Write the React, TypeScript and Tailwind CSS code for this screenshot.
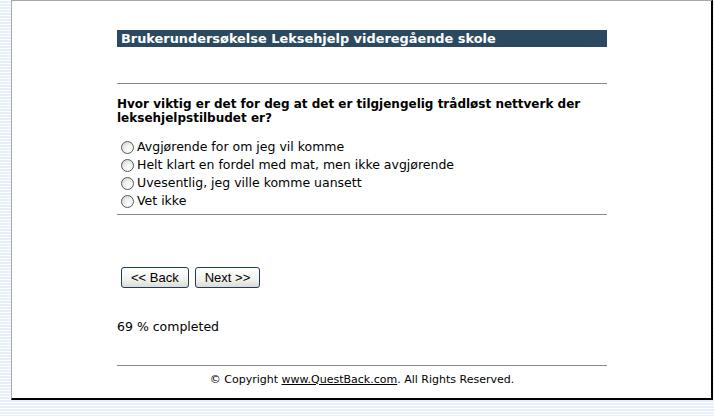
const options = [
  "Avgjørende for om jeg vil komme",
  "Helt klart en fordel med mat, men ikke avgjørende",
  "Uvesentlig, jeg ville komme uansett",
  "Vet ikke",
];

function Radio() {
  return (
    <span className="inline-block h-[13px] w-[13px] shrink-0 rounded-full border border-[#4d5a66] bg-[radial-gradient(circle_at_65%_70%,#ffffff_0%,#f2f2ee_40%,#cfcfc8_100%)]" />
  );
}

function Button({ label }: { label: string }) {
  return (
    <button
      type="button"
      className="h-[21px] rounded-[3px] border border-[#1c3d5e] bg-[linear-gradient(#ffffff,#f2f2ee_60%,#dcdcd4)] px-[9px] font-['Liberation_Sans',Arial,sans-serif] text-[13px] leading-none text-black"
    >
      {label}
    </button>
  );
}

export default function App() {
  return (
    <div className="h-[416px] w-[714px] overflow-hidden bg-[repeating-linear-gradient(to_bottom,#ffffff_0px,#ffffff_1px,#e8effc_1px,#e8effc_3px)] font-['DejaVu_Sans',Verdana,sans-serif]">
      <div className="ml-[11px] flex h-[400px] w-[702px] flex-col border-l border-t border-b-2 border-r-2 border-l-[#a8a8a8] border-t-[#a8a8a8] border-b-black border-r-black bg-white">
        <div className="ml-[105px] flex w-[490px] flex-col pt-[29px]">
          <div className="h-[17px] bg-[#2b4a60] pl-[4px] text-[12.9px] font-bold leading-[17px] text-white">
            Brukerundersøkelse Leksehjelp videregående skole
          </div>

          <hr className="mt-[36px] border-t border-[#888888]" />

          <p className="mt-[13px] text-[12px] font-bold leading-[14px] text-black">
            Hvor viktig er det for deg at det er tilgjengelig trådløst nettverk der leksehjelpstilbudet er?
          </p>

          <div className="mt-[13px] flex flex-col pl-[4px]">
            {options.map((o) => (
              <label key={o} className="flex h-[18px] items-center text-[12.5px] text-black">
                <Radio />
                <span className="ml-[3px]">{o}</span>
              </label>
            ))}
          </div>

          <hr className="mt-[4px] border-t border-[#888888]" />

          <div className="mt-[52px] flex gap-[6px] pl-[4px]">
            <Button label="<< Back" />
            <Button label="Next >>" />
          </div>

          <p className="mt-[30px] text-[12.5px] text-black">69 % completed</p>

          <hr className="mt-[28px] border-t border-[#888888]" />

          <p className="mt-[6px] text-center text-[11px] text-black">
            © Copyright <a className="underline">www.QuestBack.com</a>. All Rights Reserved.
          </p>
        </div>
      </div>
    </div>
  );
}
